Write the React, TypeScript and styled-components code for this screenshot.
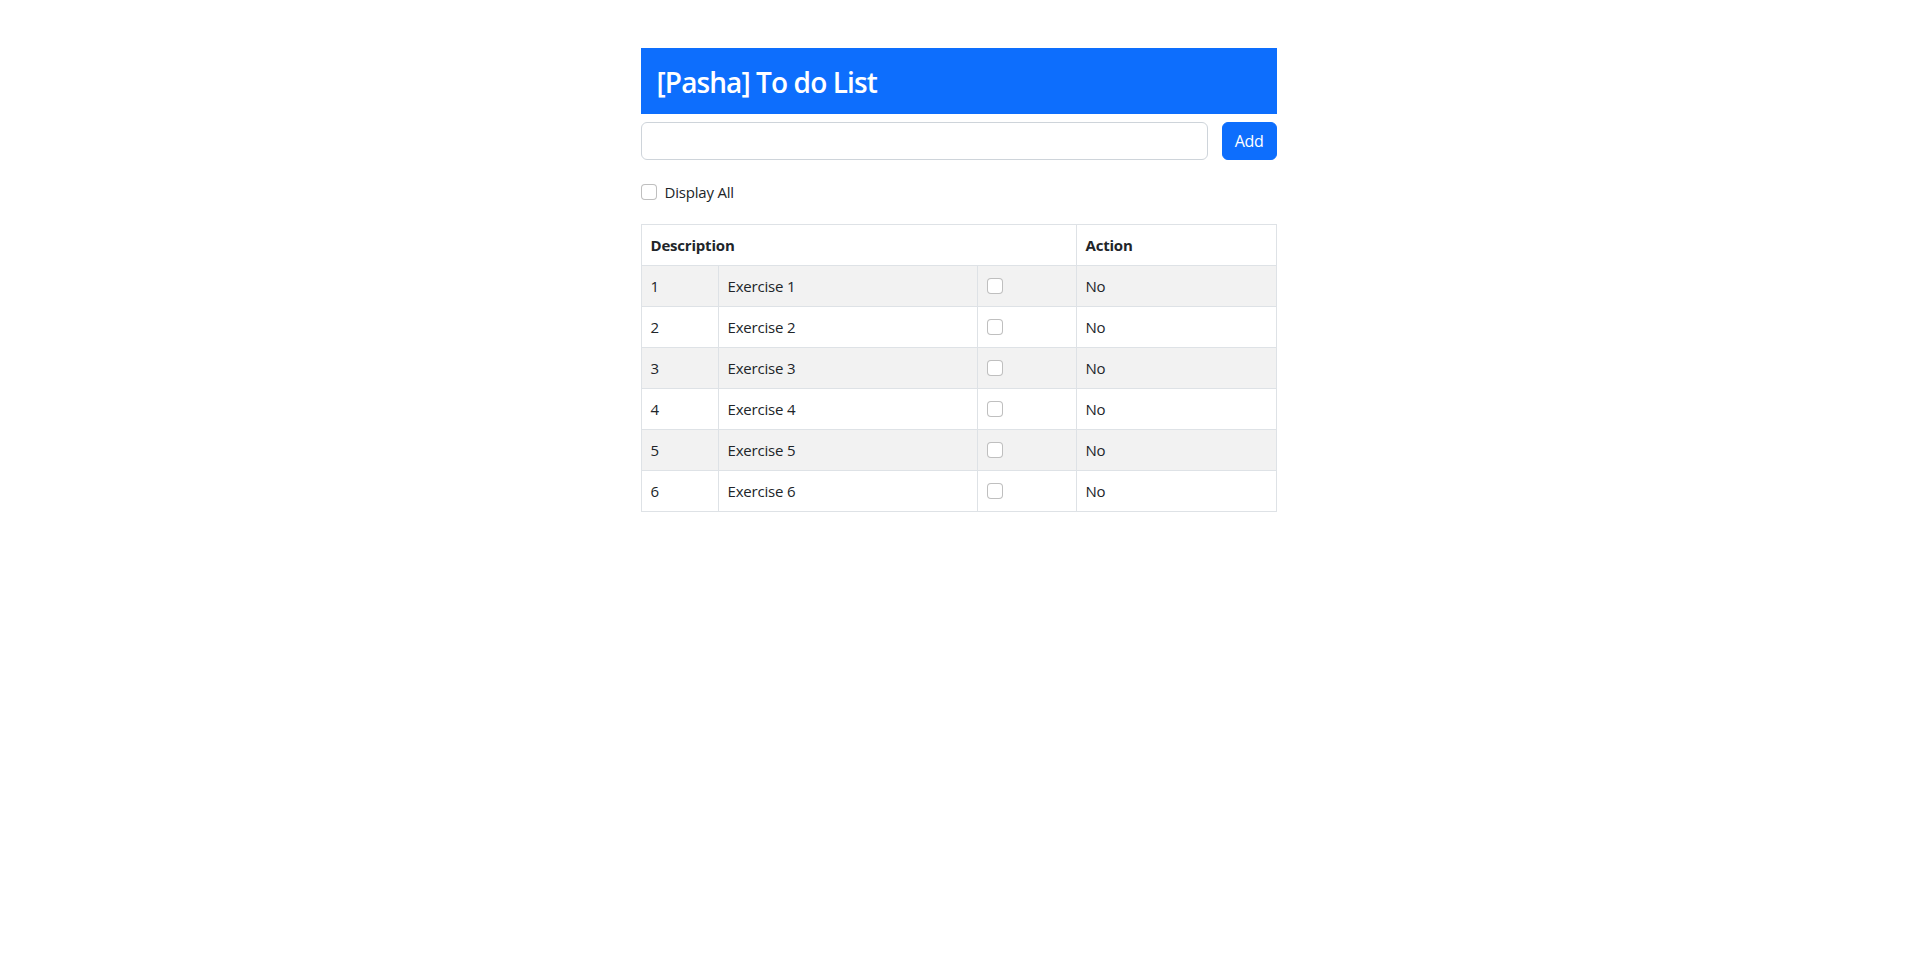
import React from "react";
import styled, { createGlobalStyle } from "styled-components";

const GlobalStyle = createGlobalStyle`
  html, body {
    margin: 0;
    padding: 0;
    background: #ffffff;
  }
  body {
    font-family: "Open Sans", "Noto Sans", "Liberation Sans", sans-serif;
    font-size: 16px;
    line-height: 1.5;
    color: #212529;
  }
  *, *::before, *::after { box-sizing: border-box; }
`;

const Page = styled.div`
  display: flex;
  justify-content: center;
  padding-top: 48px;
`;

const Panel = styled.div`
  width: 636px;
  display: flex;
  flex-direction: column;
`;

const Title = styled.h3`
  margin: 0 0 8px;
  padding: 18px 16px 14px;
  background: #0d6efd;
  color: #ffffff;
  font-size: 28px;
  font-weight: 600;
  line-height: 1.2;
  letter-spacing: -0.9px;
`;

const InputRow = styled.div`
  display: flex;
  gap: 14px;
  align-items: stretch;
`;

const TextInput = styled.input`
  flex: 1;
  height: 38px;
  padding: 6px 12px;
  font: inherit;
  color: #212529;
  background: #ffffff;
  border: 1px solid #ced4da;
  border-radius: 6px;
  outline: none;
`;

const Button = styled.button`
  height: 38px;
  padding: 6px 12px;
  font: inherit;
  letter-spacing: -0.3px;
  color: #ffffff;
  background: #0d6efd;
  border: 1px solid #0d6efd;
  border-radius: 6px;
  cursor: pointer;
`;

const CheckRow = styled.label`
  display: flex;
  align-items: flex-start;
  gap: 8px;
  margin: 20px 0 20px;
  line-height: 24px;
  font-size: 15px;
  letter-spacing: -0.2px;
`;

const Check = styled.input.attrs({ type: "checkbox" })`
  appearance: none;
  -webkit-appearance: none;
  flex: none;
  width: 16px;
  height: 16px;
  margin: 4px 0 0;
  background: #ffffff;
  border: 1px solid rgba(0, 0, 0, 0.25);
  border-radius: 4px;
`;

const Table = styled.table`
  width: 100%;
  border-collapse: collapse;
  table-layout: fixed;
  border: 1px solid #dee2e6;
`;

const Th = styled.th`
  padding: 8px 8px 8px 9px;
  text-align: left;
  font-weight: 700;
  font-size: 15px;
  letter-spacing: -0.2px;
  line-height: 24px;
  border: 1px solid #dee2e6;
`;

const Row = styled.tr<{ $striped: boolean }>`
  background: ${(p) => (p.$striped ? "#f2f2f2" : "#ffffff")};
`;

const Td = styled.td`
  padding: 8px 8px 8px 9px;
  font-size: 15px;
  letter-spacing: -0.2px;
  line-height: 24px;
  border: 1px solid #dee2e6;
  vertical-align: top;
`;

const CellCheck = styled(Check)`
  display: block;
`;

const items = [1, 2, 3, 4, 5, 6].map((n) => ({ id: n, text: `Exercise ${n}` }));

export default function App() {
  return (
    <>
      <GlobalStyle />
      <Page>
        <Panel>
          <Title>[Pasha] To do List</Title>
          <InputRow>
            <TextInput />
            <Button>Add</Button>
          </InputRow>
          <CheckRow>
            <Check />
            Display All
          </CheckRow>
          <Table>
            <colgroup>
              <col style={{ width: 77 }} />
              <col style={{ width: 259 }} />
              <col style={{ width: 99 }} />
              <col />
            </colgroup>
            <thead>
              <tr>
                <Th colSpan={3}>Description</Th>
                <Th>Action</Th>
              </tr>
            </thead>
            <tbody>
              {items.map((it, i) => (
                <Row key={it.id} $striped={i % 2 === 0}>
                  <Td>{it.id}</Td>
                  <Td>{it.text}</Td>
                  <Td>
                    <CellCheck />
                  </Td>
                  <Td>No</Td>
                </Row>
              ))}
            </tbody>
          </Table>
        </Panel>
      </Page>
    </>
  );
}
